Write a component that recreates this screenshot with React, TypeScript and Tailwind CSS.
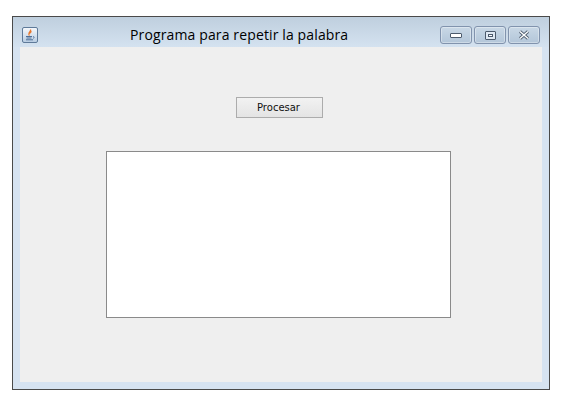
function JavaIcon() {
  return (
    <div className="flex h-4 w-4 items-center justify-center rounded-[2px] border border-[#5f7a99] bg-gradient-to-b from-[#f4f7fb] to-[#b9cde2]">
      <svg width="14" height="14" viewBox="0 0 14 14">
        <path d="M7.5 1.5c1 1.5-2 2.5-1.5 4.5.5-1 2.5-1.5 2-3" fill="none" stroke="#e8762c" strokeWidth="1.3" />
        <path d="M6 5.5c-1 1.5.5 2 1 2.5" fill="none" stroke="#f09a5a" strokeWidth="1" />
        <path d="M3 8.5h6M3.5 10h5M3 11.8h7" stroke="#4f6f98" strokeWidth="1" />
        <path d="M10 8.5c1.5 0 1.5 1.5 0 2" fill="none" stroke="#4f6f98" strokeWidth="0.8" />
      </svg>
    </div>
  );
}

function CaptionButton({ children }: { children: React.ReactNode }) {
  return (
    <div className="flex h-[18px] w-[32px] items-center justify-center rounded-[3px] border border-[#8193ad] bg-gradient-to-b from-[#c9d8e6] to-[#b3c6d9] shadow-[inset_0_0_0_1px_rgba(255,255,255,0.35)]">
      {children}
    </div>
  );
}

export default function App() {
  return (
    <div className="h-[410px] w-[577px] bg-white pl-3 pt-4 font-['Open_Sans','Noto_Sans',sans-serif]">
      <div className="flex h-[374px] w-[538px] flex-col border border-[#4a4a4a] bg-[#d6e3f1]">
        {/* Title bar */}
        <div className="flex h-[30px] items-center bg-gradient-to-b from-[#bfcfde] to-[#d4e2f0] px-[9px] pt-[6px]">
          <JavaIcon />
          <span className="ml-[92px] whitespace-nowrap text-[14px] leading-5 tracking-[0.13px] text-black">Programa para repetir la palabra</span>
          <div className="ml-auto flex gap-[2px]">
            <CaptionButton>
              <div className="h-[5px] w-[12px] rounded-[1px] border border-[#4c5a6c] bg-white" />
            </CaptionButton>
            <CaptionButton>
              <div className="flex h-[9px] w-[11px] items-center justify-center rounded-[1px] border border-[#4c5a6c] bg-[#dfe8f2]">
                <div className="h-[3px] w-[5px] border border-[#4c5a6c] bg-white" />
              </div>
            </CaptionButton>
            <CaptionButton>
              <svg width="14" height="10" viewBox="0 0 14 10">
                <path d="M3 1.5l8 7M11 1.5l-8 7" stroke="#4c5a6c" strokeWidth="3" />
                <path d="M3 1.5l8 7M11 1.5l-8 7" stroke="#ffffff" strokeWidth="1.4" />
              </svg>
            </CaptionButton>
          </div>
        </div>

        {/* Content pane */}
        <div className="mx-[7px] mb-[7px] flex flex-1 flex-col items-start bg-[#efefef] pt-[50px]">
          <button className="ml-[216px] h-[21px] w-[87px] border border-[#acacac] bg-gradient-to-b from-[#f2f2f2] to-[#e4e4e4] pr-[2px] font-['DejaVu_Sans',sans-serif] text-[10px] text-[#111]">
            Procesar
          </button>
          <div className="ml-[86px] mt-[33px] h-[167px] w-[345px] border border-[#8a8a8a] bg-white" />
        </div>
      </div>
    </div>
  );
}
